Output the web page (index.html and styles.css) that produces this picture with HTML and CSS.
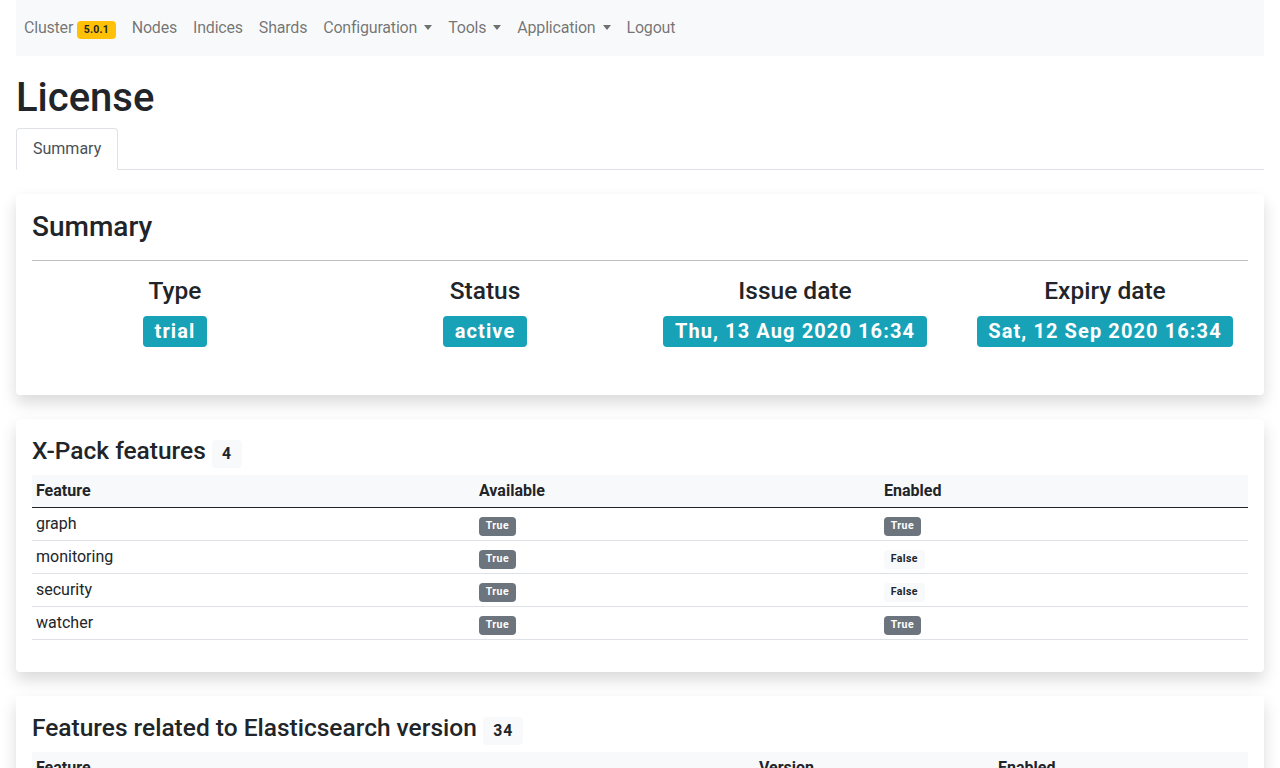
FILE: index.html
```html
<!DOCTYPE html>
<html lang="en">
<head>
<meta charset="utf-8">
<title>License</title>
<link rel="stylesheet" href="styles.css">
</head>
<body>
<div class="page">
  <nav class="navbar">
    <a class="nav-link" href="#">Cluster <small><span class="badge badge-warning">5.0.1</span></small></a>
    <a class="nav-link" href="#">Nodes</a>
    <a class="nav-link" href="#">Indices</a>
    <a class="nav-link" href="#">Shards</a>
    <a class="nav-link dropdown" href="#">Configuration</a>
    <a class="nav-link dropdown" href="#">Tools</a>
    <a class="nav-link dropdown" href="#">Application</a>
    <a class="nav-link" href="#">Logout</a>
  </nav>

  <h1 class="title">License</h1>
  <div class="tabs">
    <a class="tab active" href="#">Summary</a>
  </div>

  <section class="card">
    <h3 class="card-title">Summary</h3>
    <hr class="divider">
    <div class="summary-row">
      <div class="summary-col">
        <h4 class="label">Type</h4>
        <div class="value"><span class="badge badge-info">trial</span></div>
      </div>
      <div class="summary-col">
        <h4 class="label">Status</h4>
        <div class="value"><span class="badge badge-info">active</span></div>
      </div>
      <div class="summary-col">
        <h4 class="label">Issue date</h4>
        <div class="value"><span class="badge badge-info">Thu, 13 Aug 2020 16:34</span></div>
      </div>
      <div class="summary-col">
        <h4 class="label">Expiry date</h4>
        <div class="value"><span class="badge badge-info">Sat, 12 Sep 2020 16:34</span></div>
      </div>
    </div>
  </section>

  <section class="card">
    <h4 class="section-title">X-Pack features <small><span class="badge badge-light">4</span></small></h4>
    <table class="table xpack">
      <thead>
        <tr><th class="c1">Feature</th><th class="c2">Available</th><th>Enabled</th></tr>
      </thead>
      <tbody>
        <tr><td>graph</td><td><small><span class="badge badge-secondary">True</span></small></td><td><small><span class="badge badge-secondary">True</span></small></td></tr>
        <tr><td>monitoring</td><td><small><span class="badge badge-secondary">True</span></small></td><td><small><span class="badge badge-light">False</span></small></td></tr>
        <tr><td>security</td><td><small><span class="badge badge-secondary">True</span></small></td><td><small><span class="badge badge-light">False</span></small></td></tr>
        <tr><td>watcher</td><td><small><span class="badge badge-secondary">True</span></small></td><td><small><span class="badge badge-secondary">True</span></small></td></tr>
      </tbody>
    </table>
  </section>

  <section class="card">
    <h4 class="section-title">Features related to Elasticsearch version <small><span class="badge badge-light">34</span></small></h4>
    <table class="table es">
      <thead>
        <tr><th class="e1">Feature</th><th class="e2">Version</th><th>Enabled</th></tr>
      </thead>
      <tbody>
        <tr><td>aggregations</td><td>5.0.0</td><td><small><span class="badge badge-secondary">True</span></small></td></tr>
      </tbody>
    </table>
  </section>
</div>
</body>
</html>
```

FILE: styles.css
```css
* { box-sizing: border-box; }
html, body { margin: 0; padding: 0; }
body {
  font-family: Roboto, "Noto Sans", "Liberation Sans", sans-serif;
  font-size: 16px;
  line-height: 1.5;
  color: #212529;
  background: #fff;
}
.page { padding: 0 16px; }

.navbar {
  display: flex;
  align-items: center;
  height: 56px;
  background: #f8f9fa;
  padding: 0;
}
.nav-link {
  display: block;
  padding: 8px;
  color: rgba(0,0,0,.55);
  text-decoration: none;
  letter-spacing: -.2px;
}
.nav-link small { font-size: .875em; }
.nav-link .badge { letter-spacing: .2px; }
.dropdown::after {
  content: "";
  display: inline-block;
  margin-left: 7px;
  vertical-align: 3px;
  border-top: 5px solid;
  border-right: 4.5px solid transparent;
  border-left: 4.5px solid transparent;
}

.badge {
  display: inline-block;
  padding: .35em .65em;
  font-size: .75em;
  font-weight: 700;
  line-height: 1;
  text-align: center;
  white-space: nowrap;
  vertical-align: baseline;
  border-radius: .25rem;
  color: #fff;
}
.badge-warning { background: #ffc107; color: #212529; }
.badge-info { background: #17a2b8; }
.badge-secondary { background: #6c757d; }
.badge-light { background: #f8f9fa; color: #212529; }

.title {
  font-size: 40px;
  font-weight: 500;
  line-height: 1.2;
  margin: 18px 0 6px;
}

.tabs {
  display: flex;
  border-bottom: 1px solid #dee2e6;
  margin-bottom: 24px;
}
.tab {
  display: block;
  padding: 8px 16px;
  margin-bottom: -1px;
  color: #495057;
  text-decoration: none;
  border: 1px solid transparent;
  border-top-left-radius: .25rem;
  border-top-right-radius: .25rem;
}
.tab.active {
  background: #fff;
  border-color: #dee2e6 #dee2e6 #fff;
}

.card {
  background: #fff;
  border-radius: .25rem;
  box-shadow: 0 .5rem 1rem rgba(0,0,0,.15);
  padding: 16px;
  margin-bottom: 24px;
}
.card-title {
  font-size: 28px;
  font-weight: 500;
  line-height: 1.2;
  margin: 0;
}
.divider {
  margin: 16px 0;
  border: 0;
  border-top: 1px solid rgba(0,0,0,.25);
}
.summary-row {
  display: grid;
  grid-template-columns: repeat(4, 1fr);
  margin: 0 -12px 24px;
}
.summary-col {
  text-align: center;
  padding: 0 12px;
}
.label {
  font-size: 24.5px;
  font-weight: 500;
  line-height: 1.2;
  margin: -1px 0 11px;
}
.value {
  font-size: 24px;
  font-weight: 500;
  line-height: 1.2;
  margin: 0 0 8px;
}
.value .badge {
  font-size: 20px;
  padding: 5.5px 11.7px;
  letter-spacing: 1.1px;
}

.section-title {
  font-size: 24.5px;
  font-weight: 500;
  line-height: 1.2;
  margin: 0 0 7px;
  padding-top: 1px;
}
.section-title small { font-size: .857em; }
.section-title .badge { padding: .4em .65em; letter-spacing: 1px; }

.table {
  width: 100%;
  border-collapse: collapse;
  margin-bottom: 16px;
}
.table th, .table td {
  padding: 4px;
  text-align: left;
  vertical-align: top;
  border-bottom: 1px solid #dee2e6;
}
.table thead th {
  background: #f8f9fa;
  font-weight: 700;
  border-bottom: 1px solid #212529;
}
.table small { font-size: .875em; }
.table .badge { letter-spacing: .4px; padding: .38em .65em; }
.xpack .c1 { width: 443px; }
.xpack .c2 { width: 405px; }
.es .e1 { width: 723px; }
.es .e2 { width: 239px; }
```
